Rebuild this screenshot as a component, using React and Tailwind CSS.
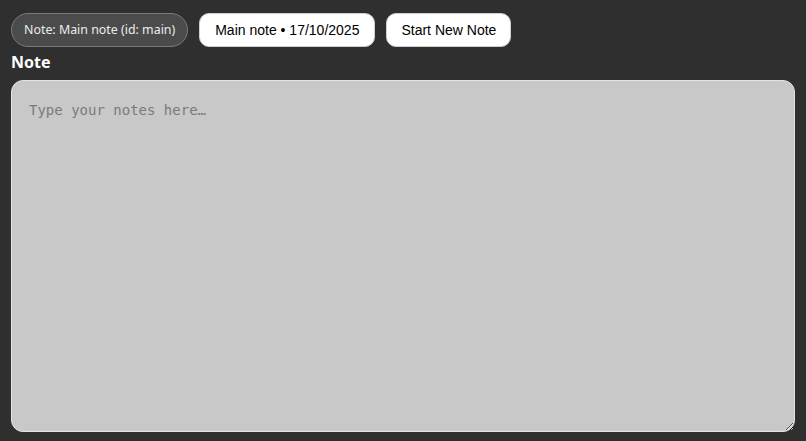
import React, { useState } from 'react';

function App() {
  const [text, setText] = useState('');

  return (
    <div className="w-full h-[441px] bg-[#2f2f2f] px-[11px] pt-[13px] flex flex-col font-['Noto_Sans',sans-serif]">
      <div className="flex items-center gap-[11px]">
        <span className="h-[34px] px-[12px] flex items-center rounded-full bg-[#4b4b4b] border border-[#7a7a7a] text-[#ececec] text-[12.4px]">
          Note: Main note (id: main)
        </span>
        <button className="h-[34px] px-[15px] rounded-[10px] bg-white border border-[#cfcfcf] text-black text-[14px] font-['Liberation_Sans',Arial,sans-serif]">
          Main note • 17/10/2025
        </button>
        <button className="h-[34px] px-[14px] rounded-[10px] bg-white border border-[#cfcfcf] text-black text-[14px] font-['Liberation_Sans',Arial,sans-serif]">
          Start New Note
        </button>
      </div>

      <h2 className="mt-[4px] text-[16px] leading-[22px] font-bold text-white">Note</h2>

      <textarea
        value={text}
        onChange={(e) => setText(e.target.value)}
        placeholder="Type your notes here…"
        className="mt-[7px] w-[784px] h-[352px] rounded-[12px] bg-[#c8c8c8] border border-[#e4e4e4] px-[17px] py-[19px] text-[14px] leading-[20px] text-black placeholder:text-[#7b7b7b] font-['DejaVu_Sans_Mono',monospace] outline-none"
      />
    </div>
  );
}

export default App;
